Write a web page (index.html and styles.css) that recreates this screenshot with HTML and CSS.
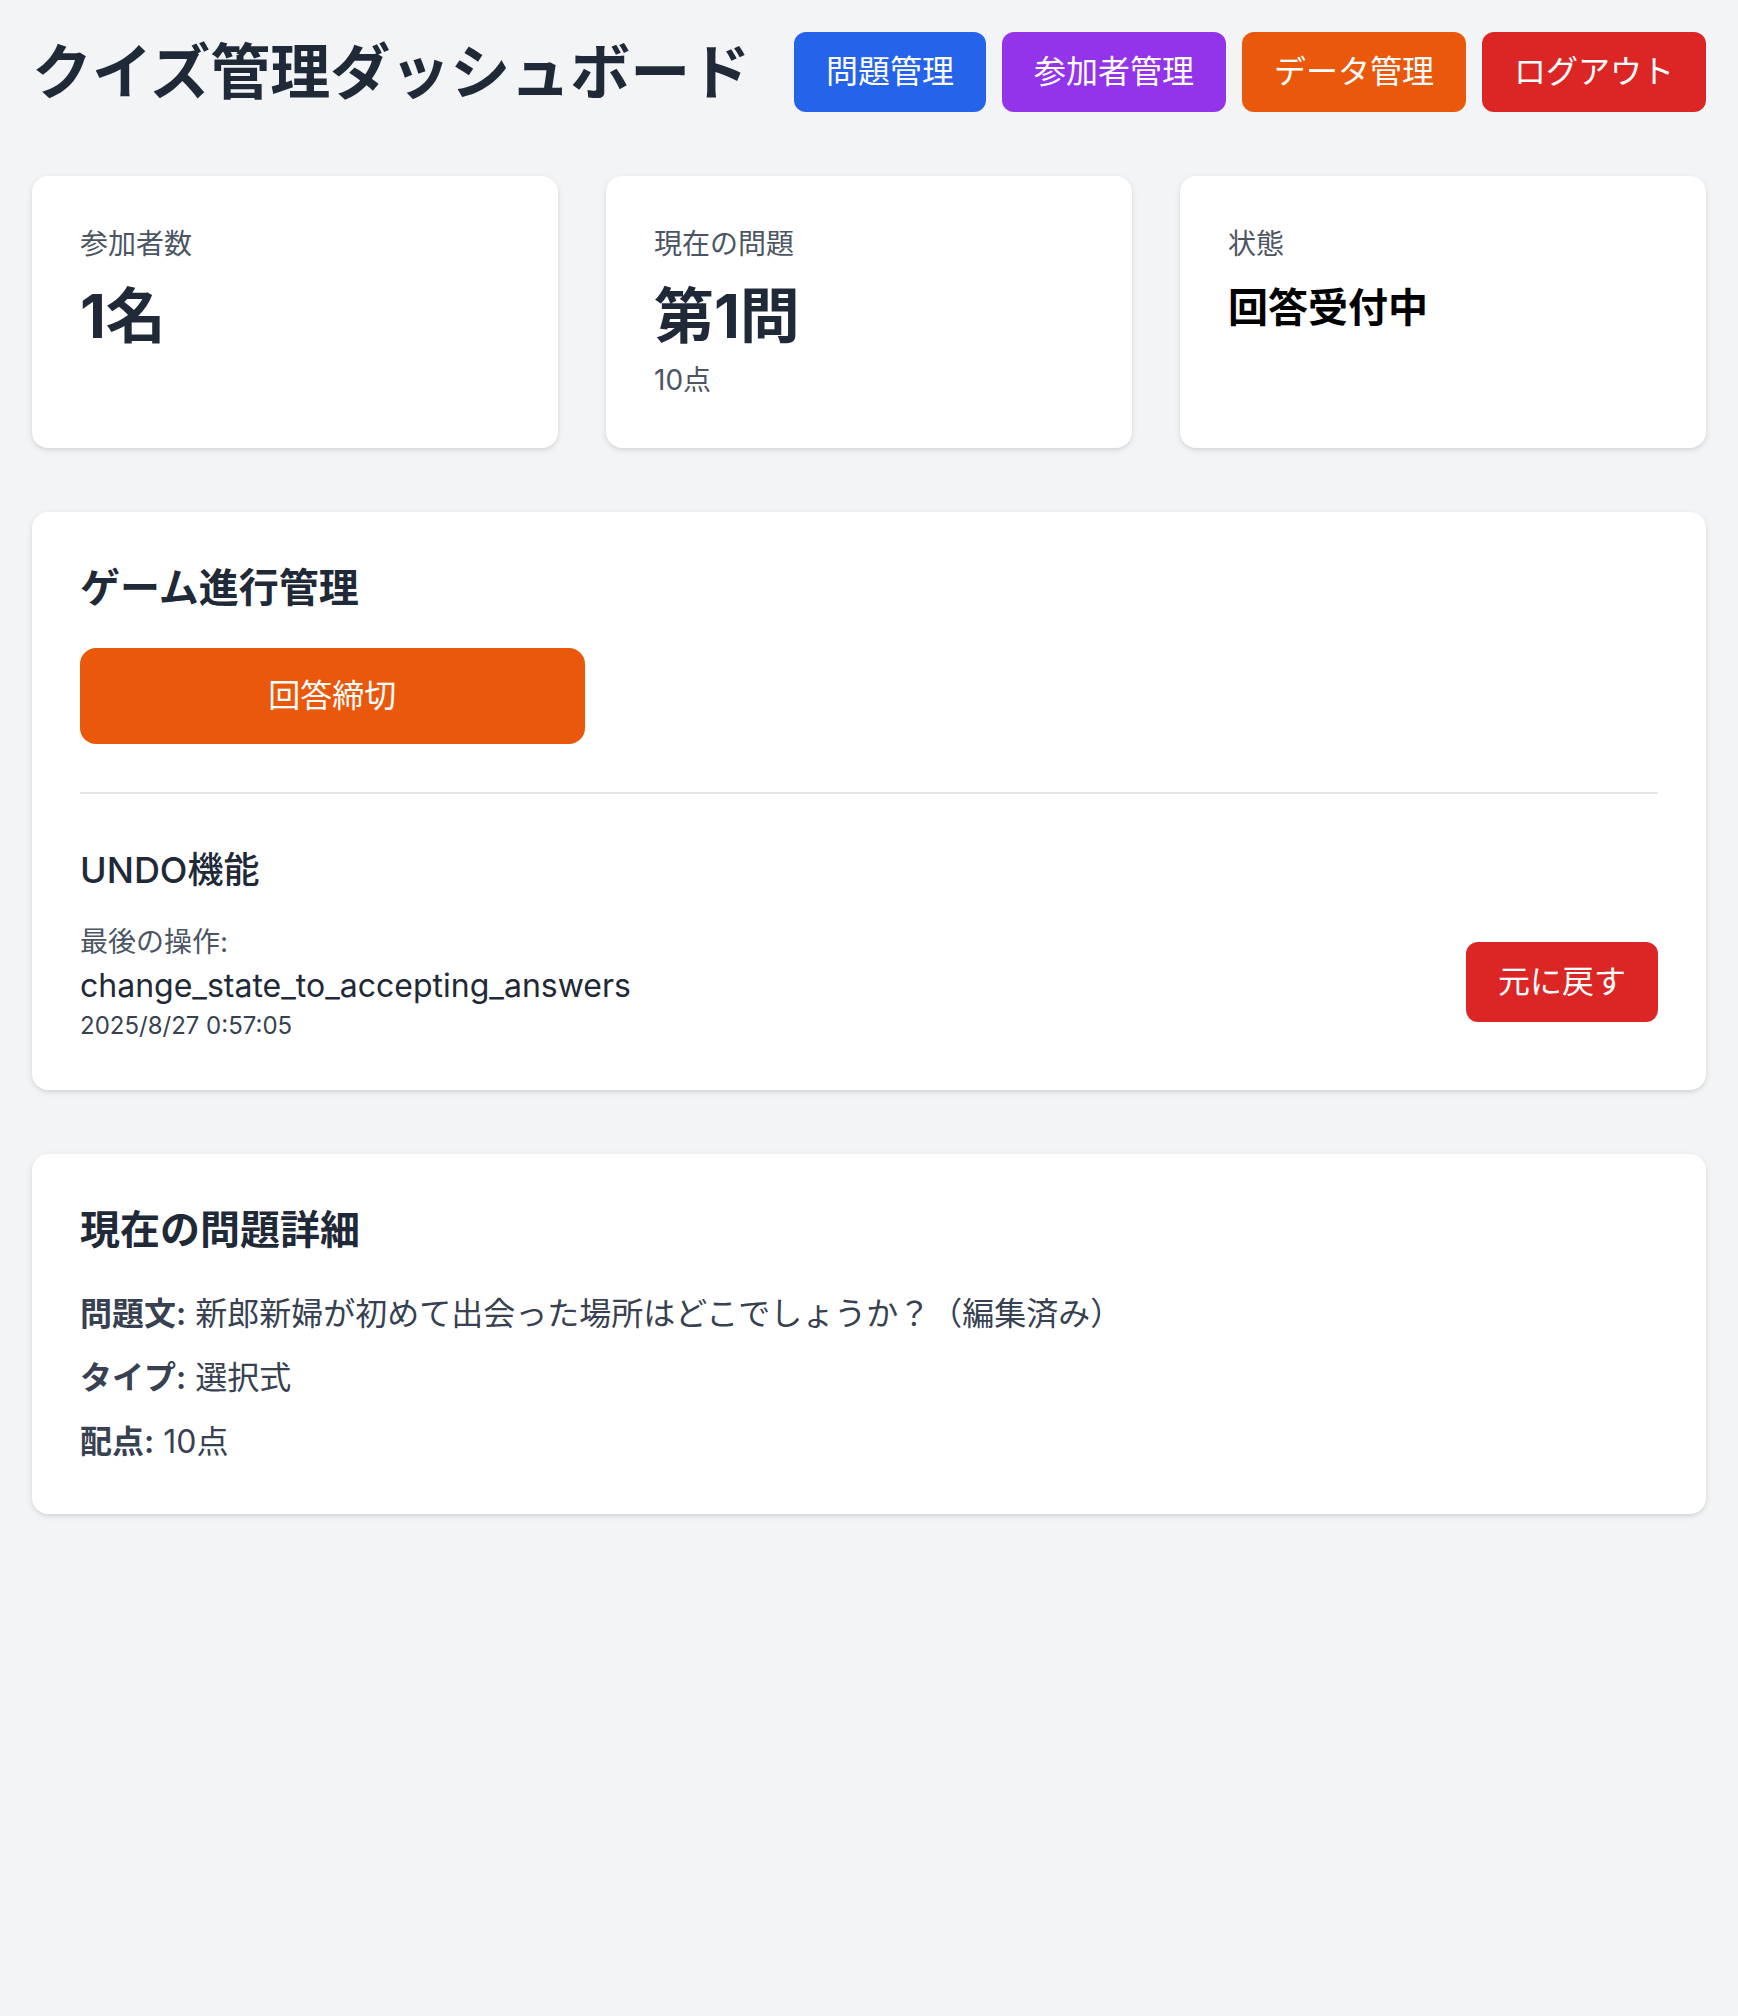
FILE: index.html
```html
<!DOCTYPE html>
<html lang="ja">
<head>
<meta charset="utf-8">
<title>クイズ管理ダッシュボード</title>
<link rel="stylesheet" href="styles.css">
</head>
<body>
<div class="page">
  <header class="header">
    <h1 class="title">クイズ管理ダッシュボード</h1>
    <nav class="nav">
      <button class="btn btn-blue">問題管理</button>
      <button class="btn btn-purple">参加者管理</button>
      <button class="btn btn-orange">データ管理</button>
      <button class="btn btn-red">ログアウト</button>
    </nav>
  </header>

  <section class="stats">
    <div class="card stat">
      <div class="stat-label">参加者数</div>
      <div class="stat-value">1名</div>
    </div>
    <div class="card stat">
      <div class="stat-label">現在の問題</div>
      <div class="stat-value">第1問</div>
      <div class="stat-sub">10点</div>
    </div>
    <div class="card stat">
      <div class="stat-label">状態</div>
      <div class="stat-status">回答受付中</div>
    </div>
  </section>

  <section class="card panel">
    <h2 class="panel-title">ゲーム進行管理</h2>
    <div class="actions">
      <button class="action-btn">回答締切</button>
    </div>
    <div class="undo">
      <h3 class="undo-title">UNDO機能</h3>
      <div class="undo-row">
        <div class="undo-info">
          <div class="undo-label">最後の操作:</div>
          <div class="undo-op">change_state_to_accepting_answers</div>
          <div class="undo-time">2025/8/27 0:57:05</div>
        </div>
        <button class="btn btn-red">元に戻す</button>
      </div>
    </div>
  </section>

  <section class="card panel">
    <h2 class="panel-title">現在の問題詳細</h2>
    <div class="details">
      <p class="detail"><span class="detail-key">問題文:</span> 新郎新婦が初めて出会った場所はどこでしょうか？（編集済み）</p>
      <p class="detail"><span class="detail-key">タイプ:</span> 選択式</p>
      <p class="detail"><span class="detail-key">配点:</span> 10点</p>
    </div>
  </section>
</div>
</body>
</html>
```

FILE: styles.css
```css
* {
  box-sizing: border-box;
}

html, body {
  margin: 0;
  padding: 0;
}

body {
  background: #f3f4f6;
  font-family: "Inter", "Noto Sans CJK JP", sans-serif;
  color: #1f2937;
  min-height: 2016px;
}

.page {
  padding: 32px;
}

.header {
  display: flex;
  justify-content: space-between;
  align-items: center;
  margin-bottom: 64px;
}

.title {
  margin: 0;
  font-size: 60px;
  line-height: 72px;
  font-weight: 700;
  color: #1f2937;
}

.nav {
  display: flex;
  gap: 16px;
}

.btn {
  border: none;
  font-family: inherit;
  font-size: 32px;
  line-height: 48px;
  padding: 16px 32px;
  border-radius: 12px;
  color: #ffffff;
  cursor: pointer;
}

.btn-blue { background: #2563eb; }
.btn-purple { background: #9333ea; }
.btn-orange { background: #ea580c; }
.btn-red { background: #dc2626; }

.stats {
  display: grid;
  grid-template-columns: repeat(3, 1fr);
  gap: 48px;
  margin-bottom: 64px;
}

.card {
  background: #ffffff;
  border-radius: 16px;
  box-shadow: 0 2px 6px 0 rgba(0, 0, 0, 0.1), 0 2px 4px -2px rgba(0, 0, 0, 0.1);
}

.stat {
  padding: 48px;
}

.stat-label {
  font-size: 28px;
  line-height: 40px;
  color: #4b5563;
}

.stat-value {
  margin-top: 16px;
  font-size: 60px;
  line-height: 72px;
  font-weight: 700;
  color: #1f2937;
}

.stat-sub {
  margin-top: 8px;
  font-size: 28px;
  line-height: 40px;
  color: #4b5563;
}

.stat-status {
  margin-top: 16px;
  font-size: 40px;
  line-height: 56px;
  font-weight: 700;
  color: #000000;
}

.panel {
  padding: 48px;
  margin-bottom: 64px;
}

.panel-title {
  margin: 0 0 32px;
  font-size: 40px;
  line-height: 56px;
  font-weight: 700;
  color: #1f2937;
}

.actions {
  display: grid;
  grid-template-columns: repeat(3, 1fr);
  gap: 32px;
}

.action-btn {
  border: none;
  font-family: inherit;
  font-size: 32px;
  line-height: 48px;
  padding: 24px 48px;
  border-radius: 16px;
  background: #ea580c;
  color: #ffffff;
  cursor: pointer;
}

.undo {
  margin-top: 48px;
  padding-top: 48px;
  border-top: 2px solid #e5e7eb;
}

.undo-title {
  margin: 0 0 24px;
  font-size: 36px;
  line-height: 56px;
  font-weight: 500;
  color: #1f2937;
}

.undo-row {
  display: flex;
  justify-content: space-between;
  align-items: center;
}

.undo-label {
  font-size: 28px;
  line-height: 40px;
  color: #4b5563;
}

.undo-op {
  font-size: 32px;
  line-height: 48px;
  color: #1f2937;
}

.undo-time {
  font-size: 24px;
  line-height: 32px;
  color: #374151;
}

.details {
  display: flex;
  flex-direction: column;
  gap: 16px;
}

.detail {
  margin: 0;
  font-size: 32px;
  line-height: 48px;
  color: #374151;
}

.detail-key {
  font-weight: 600;
}
```
